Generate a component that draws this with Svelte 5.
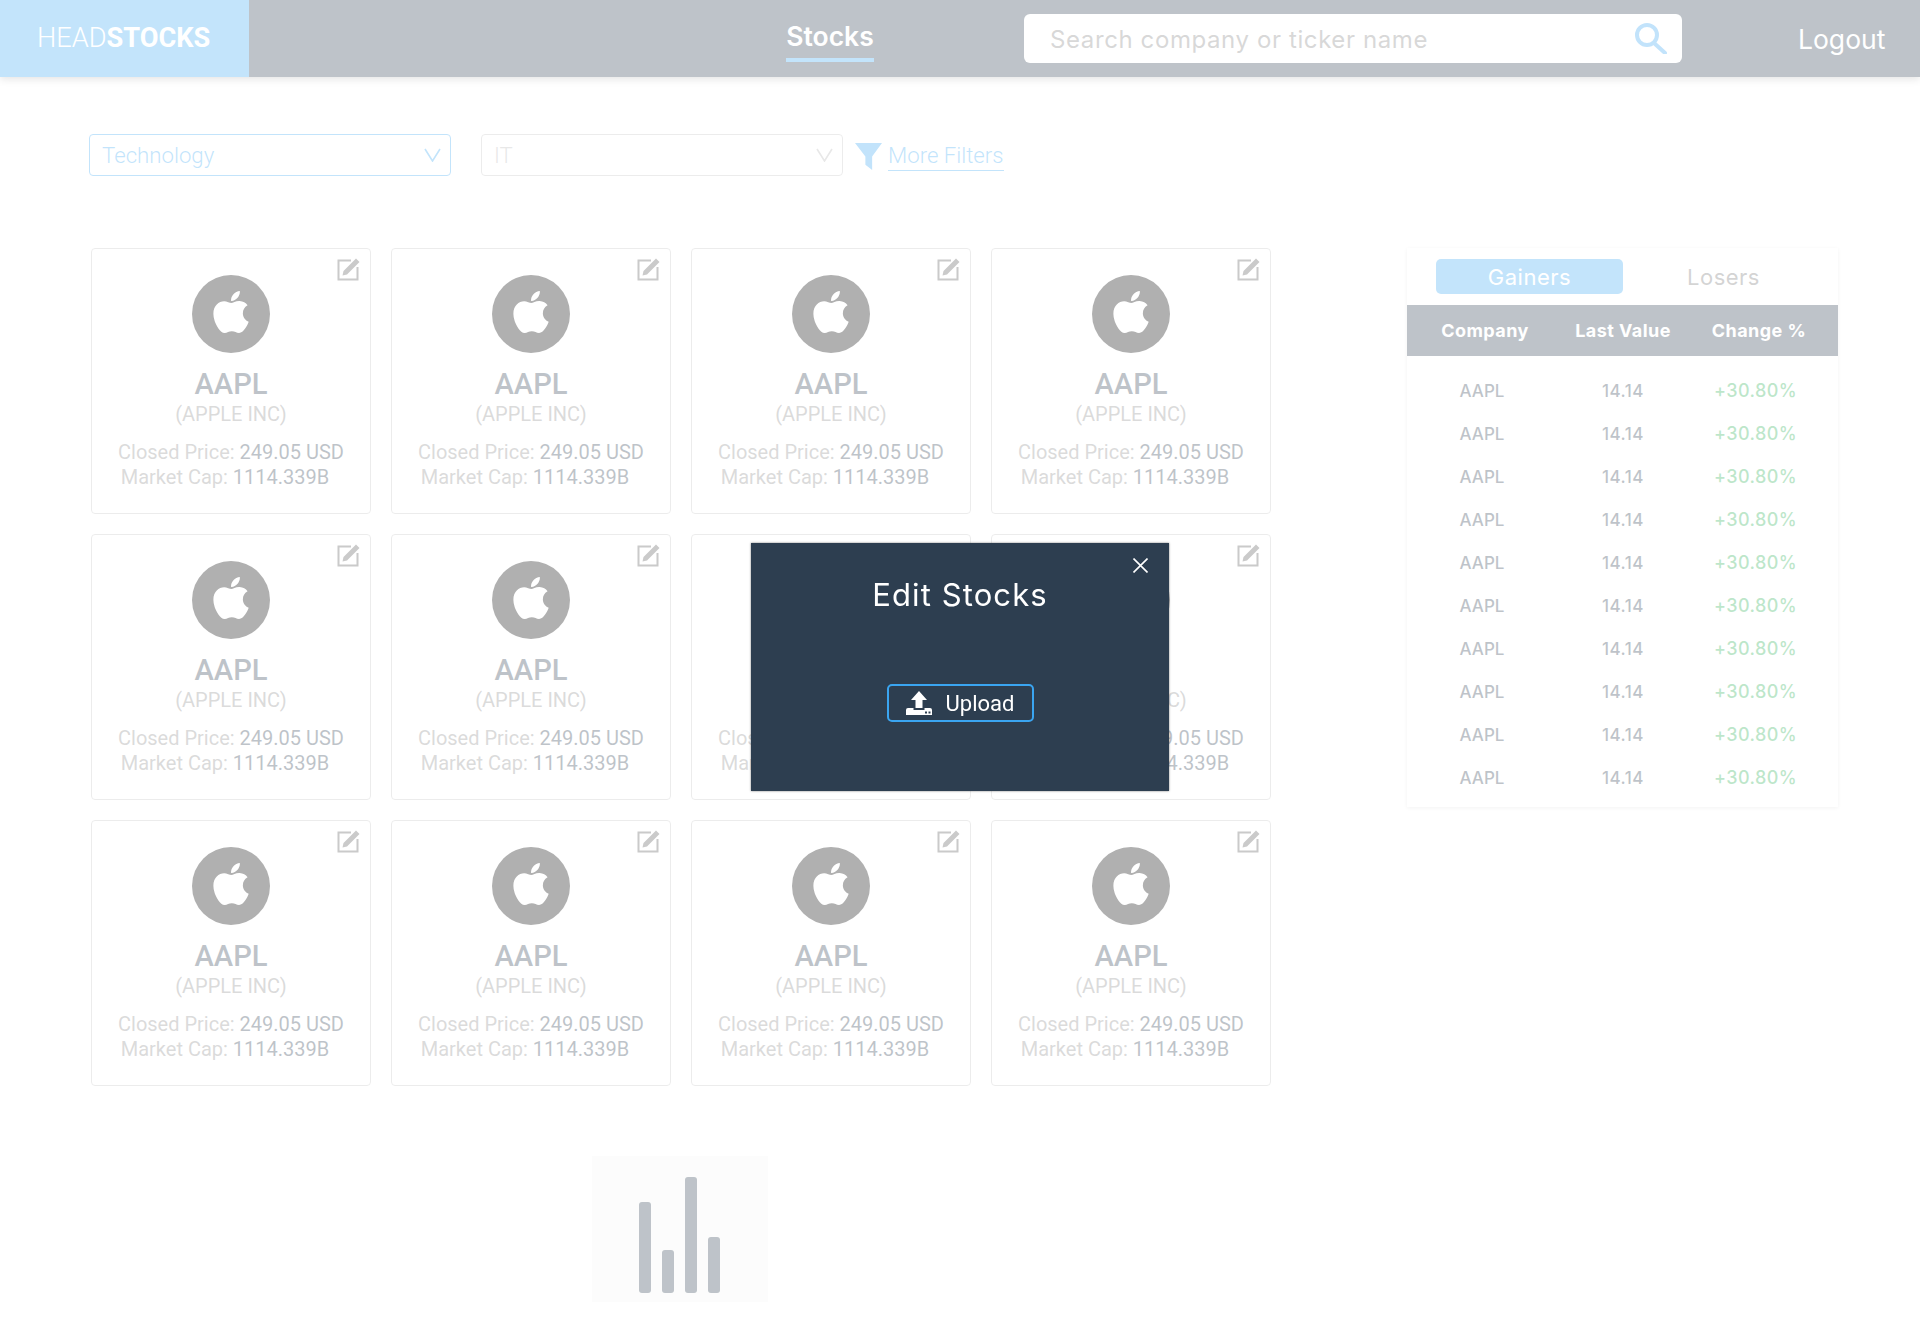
<script>
  const cards = Array.from({ length: 12 }, (_, i) => ({
    id: i,
    ticker: 'AAPL',
    name: '(APPLE INC)',
    price: '249.05 USD',
    cap: '1114.339B'
  }));
  const rows = Array.from({ length: 10 }, () => ({ company: 'AAPL', value: '14.14', change: '+30.80%' }));
  const bars = [91, 43, 116, 56];
  const applePath =
    'M318.7 268.7c-.2-36.7 16.4-64.4 50-84.8-18.8-26.9-47.2-41.7-84.7-44.6-35.5-2.8-74.3 20.7-88.5 20.7-15 0-49.4-19.7-76.4-19.7C63.3 141.2 4 184.8 4 273.5q0 39.3 14.4 81.2c12.8 36.7 59 126.7 107.2 125.2 25.2-.6 43-17.9 75.8-17.9 31.8 0 48.3 17.9 76.4 17.9 48.6-.7 90.4-82.5 102.6-119.3-65.2-30.7-61.7-90-61.7-91.9zm-56.6-164.2c27.3-32.4 24.8-61.9 24-72.5-24.1 1.4-52 16.4-67.9 34.9-17.5 19.8-27.8 44.3-25.6 71.9 26.1 2 49.9-11.4 69.5-34.3z';
</script>

<header class="topbar">
  <div class="logo">HEAD<b>STOCKS</b></div>
  <nav class="nav"><span class="nav-item">Stocks</span></nav>
  <div class="search">
    <span class="placeholder">Search company or ticker name</span>
    <svg class="search-icon" viewBox="0 0 33 31" fill="none" stroke="#3aa5f1" stroke-width="4">
      <circle cx="13" cy="12" r="10" />
      <path d="M20 20 L31 30" stroke-linecap="round" />
    </svg>
  </div>
  <div class="logout">Logout</div>
</header>

<section class="filters">
  <div class="select active">
    <span>Technology</span>
    <svg viewBox="0 0 17 14" fill="none" stroke="currentColor" stroke-width="1.6"><path d="M1 1 L8.5 13 L16 1" /></svg>
  </div>
  <div class="select disabled">
    <span>IT</span>
    <svg viewBox="0 0 17 14" fill="none" stroke="currentColor" stroke-width="1.6"><path d="M1 1 L8.5 13 L16 1" /></svg>
  </div>
  <svg class="funnel" viewBox="0 0 26 26"><path d="M0 0 H26 L16.5 13 V26 L10 21 V13 Z" fill="#3aa5f1" /></svg>
  <span class="more">More Filters</span>
</section>

<main class="content">
  <div class="left">
    <div class="grid">
      {#each cards as card (card.id)}
        <article class="card">
          <svg class="edit" viewBox="0 0 24 24" fill="none">
            <path d="M14 3.5 H1.5 V22.5 H20.5 V10" stroke="#555" stroke-width="2" />
            <path d="M5.5 18.5 L6.5 14 L19 1.5 L22.5 5 L10 17.5 Z" fill="#555" />
          </svg>
          <div class="avatar">
            <svg viewBox="0 0 384 512"><path d={applePath} fill="#fff" /></svg>
          </div>
          <h3>{card.ticker}</h3>
          <p class="company">{card.name}</p>
          <p class="stat">Closed Price: <strong>{card.price}</strong></p>
          <p class="stat cap">Market Cap: <strong>{card.cap}</strong></p>
        </article>
      {/each}
    </div>
    <div class="loader">
      {#each bars as h}
        <span class="bar" style="height: {h}px"></span>
      {/each}
    </div>
  </div>

  <aside class="panel">
    <div class="tabs">
      <span class="tab on">Gainers</span>
      <span class="tab">Losers</span>
    </div>
    <div class="thead">
      <span>Company</span>
      <span>Last Value</span>
      <span>Change %</span>
    </div>
    <div class="tbody">
      {#each rows as row}
        <div class="row">
          <span class="name">{row.company}</span>
          <span class="value">{row.value}</span>
          <span class="up">{row.change}</span>
        </div>
      {/each}
    </div>
  </aside>
</main>

<div class="overlay">
  <div class="modal">
    <svg class="close" viewBox="0 0 15 15" stroke="#fff" stroke-width="1.6"><path d="M0.5 0.5 L14.5 14.5 M14.5 0.5 L0.5 14.5" /></svg>
    <h2>Edit Stocks</h2>
    <button class="upload">
      <svg viewBox="0 0 26 24" fill="#fff">
        <path d="M13 0 L21 9 H16.5 V17 H9.5 V9 H5 Z" />
        <path fill-rule="evenodd" d="M2 17 H7.5 V19 H18.5 V17 H24 Q26 17 26 19 V24 H0 V19 Q0 17 2 17 Z M19 20.5 h2 v2 h-2 Z M22.5 20.5 h2 v2 h-2 Z" />
      </svg>
      Upload
    </button>
  </div>
</div>

<style>
  :global(body) {
    background: #fff;
    font-family: Roboto, sans-serif;
  }

  .topbar {
    display: flex;
    align-items: stretch;
    height: 77px;
    background: #2d3e50;
    color: #fff;
    box-shadow: 0 2px 8px rgba(0, 0, 0, 0.35);
  }

  .logo {
    width: 249px;
    padding-left: 37px;
    box-sizing: border-box;
    background: #3da8f2;
    font-size: 27.2px;
    font-weight: 300;
    line-height: 77px;
  }

  .logo b {
    font-weight: 700;
  }

  .nav {
    width: 775px;
    display: flex;
    justify-content: center;
    padding-left: 387px;
    box-sizing: border-box;
  }

  .nav-item {
    height: 62px;
    box-sizing: border-box;
    padding-top: 20px;
    font-family: Inter, sans-serif;
    font-size: 26.5px;
    font-weight: 600;
    border-bottom: 4px solid #3da8f2;
  }

  .search {
    width: 658px;
    height: 49px;
    margin-top: 14px;
    display: flex;
    align-items: center;
    justify-content: space-between;
    padding: 0 15px 0 26px;
    box-sizing: border-box;
    border-radius: 6px;
    background: #fff;
  }

  .placeholder {
    padding-top: 2px;
    font-family: Inter, sans-serif;
    font-size: 24px;
    letter-spacing: 0.6px;
    color: #818181;
  }

  .search-icon {
    width: 33px;
    height: 31px;
  }

  .logout {
    margin-left: 116px;
    line-height: 79px;
    font-family: Inter, sans-serif;
    font-size: 26.5px;
  }

  .filters {
    display: flex;
    align-items: flex-start;
    padding: 57px 0 0 89px;
  }

  .select {
    width: 362px;
    height: 42px;
    margin-right: 30px;
    display: flex;
    align-items: center;
    justify-content: space-between;
    padding: 0 9px 0 12px;
    box-sizing: border-box;
    border: 1px solid;
    border-radius: 4px;
    font-size: 22.2px;
    font-weight: 300;
  }

  .select svg {
    width: 17px;
    height: 14px;
  }

  .select.active {
    color: #3da8f2;
    border-color: #3da8f2;
  }

  .select.disabled {
    margin-right: 12px;
    color: #b4b4b4;
    border-color: #c2c2c2;
  }

  .funnel {
    width: 27px;
    height: 27px;
    margin: 9px 6px 0 0;
  }

  .more {
    margin-top: 9px;
    height: 27px;
    font-size: 22.2px;
    font-weight: 300;
    line-height: 25px;
    color: #3da8f2;
    border-bottom: 1px solid #3da8f2;
  }

  .content {
    display: flex;
    justify-content: space-between;
    padding: 72px 82px 0 91px;
  }

  .grid {
    display: grid;
    grid-template-columns: repeat(4, 280px);
    gap: 20px;
  }

  .left {
    display: flex;
    flex-direction: column;
    align-items: center;
  }

  .card {
    position: relative;
    height: 266px;
    box-sizing: border-box;
    padding-top: 26px;
    border: 1px solid #c2c2c2;
    border-radius: 4px;
    text-align: center;
    color: #747474;
  }

  .edit {
    position: absolute;
    top: 8px;
    right: 9px;
    width: 24px;
    height: 24px;
  }

  .avatar {
    width: 78px;
    height: 78px;
    margin: 0 auto;
    display: flex;
    align-items: center;
    justify-content: center;
    border-radius: 50%;
    background: #000;
  }

  .avatar svg {
    width: 36px;
    height: 48px;
    margin-bottom: 5px;
  }

  h3 {
    margin: 14px 0 0;
    font-size: 29.2px;
    line-height: 34px;
    font-weight: 500;
    color: #2d3e50;
  }

  .company {
    margin: 0 0 12px;
    font-size: 20px;
    font-weight: 400;
    line-height: 27px;
    color: #8a8a8a;
  }

  .stat {
    margin: 0;
    font-size: 20px;
    line-height: 25px;
    font-weight: 400;
    color: #8a8a8a;
  }

  .stat.cap {
    padding-right: 12px;
  }

  .stat strong {
    font-weight: 400;
    color: #2d3e50;
  }

  .loader {
    width: 176px;
    height: 146px;
    margin: 70px 2px 0 0;
    display: flex;
    align-items: flex-end;
    justify-content: center;
    gap: 11px;
    padding: 0 1px 9px 0;
    box-sizing: border-box;
    background: #f5f5f5;
  }

  .bar {
    width: 12px;
    border-radius: 3px;
    background: #2d3e50;
  }

  .panel {
    width: 431px;
    height: 559px;
    box-shadow: 0 1px 4px rgba(0, 0, 0, 0.16);
    font-family: Inter, sans-serif;
  }

  .tabs {
    display: grid;
    grid-template-columns: 187px 187px;
    gap: 7px;
    padding: 11px 0 11px 29px;
  }

  .tab {
    height: 35px;
    border-radius: 5px;
    text-align: center;
    font-size: 22px;
    line-height: 37px;
    letter-spacing: 0.5px;
    color: #747474;
  }

  .tab.on {
    background: #3da8f2;
    color: #fff;
  }

  .thead,
  .row {
    display: grid;
    grid-template-columns: 156px 120px 152px;
    text-align: center;
  }

  .thead {
    height: 51px;
    align-items: center;
    background: #2d3e50;
    color: #fff;
    font-size: 18px;
    font-weight: 700;
    letter-spacing: 0.45px;
  }

  .tbody {
    padding-top: 13px;
  }

  .row {
    height: 43px;
    align-items: center;
    font-size: 17px;
    font-weight: 500;
    color: #2d3e50;
  }

  .name {
    padding-right: 6px;
  }

  .value {
    letter-spacing: 0.5px;
  }

  .up {
    font-size: 18px;
    color: #2aae54;
    padding-right: 7px;
    letter-spacing: 0.4px;
  }

  .overlay {
    position: fixed;
    inset: 0;
    display: flex;
    align-items: center;
    justify-content: center;
    padding-bottom: 1px;
    background: rgba(255, 255, 255, 0.69);
  }

  .modal {
    position: relative;
    width: 418px;
    height: 248px;
    display: flex;
    flex-direction: column;
    align-items: center;
    background: #2d3e50;
    color: #fff;
    box-shadow: 0 0 2px rgba(0, 0, 0, 0.5);
  }

  .close {
    position: absolute;
    top: 15px;
    right: 21px;
    width: 15px;
    height: 15px;
  }

  h2 {
    margin: 33px 0 0;
    font-family: Inter, sans-serif;
    font-size: 31px;
    line-height: 38px;
    font-weight: 400;
    letter-spacing: 1.1px;
  }

  .upload {
    width: 147px;
    height: 38px;
    margin-top: 70px;
    display: flex;
    align-items: center;
    justify-content: center;
    gap: 14px;
    padding: 0;
    border: 2px solid #3aa5f1;
    border-radius: 5px;
    background: transparent;
    color: #fff;
    font-family: Roboto, sans-serif;
    font-size: 22px;
  }

  .upload svg {
    width: 26px;
    height: 24px;
  }
</style>
